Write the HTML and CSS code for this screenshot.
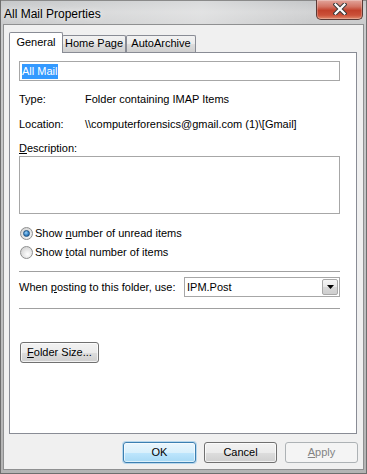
FILE: index.html
```html
<!DOCTYPE html>
<html>
<head>
<meta charset="utf-8">
<link rel="stylesheet" href="styles.css">
</head>
<body>
<div class="window">
  <div class="titlebar">
    <span class="title">All Mail Properties</span>
    <div class="close">
      <svg width="14" height="12" viewBox="0 0 14 12">
        <path d="M2.5 1.5 L11.5 10.5 M11.5 1.5 L2.5 10.5" stroke="#3a3a3a" stroke-width="4.2" stroke-linecap="square"/>
        <path d="M2.5 1.5 L11.5 10.5 M11.5 1.5 L2.5 10.5" stroke="#ffffff" stroke-width="2.2" stroke-linecap="square"/>
      </svg>
    </div>
  </div>
  <div class="client">
    <div class="tabs">
      <div class="tab active">General</div>
      <div class="tab home">Home Page</div>
      <div class="tab archive">AutoArchive</div>
    </div>
    <div class="panel">
      <div class="name-input"><span class="sel">All Mail</span></div>
      <div class="info-row row-type"><span class="lbl">Type:</span><span>Folder containing IMAP Items</span></div>
      <div class="info-row row-loc"><span class="lbl">Location:</span><span>\\computerforensics@gmail.com (1)\[Gmail]</span></div>
      <div class="desc-label"><u>D</u>escription:</div>
      <div class="textarea"></div>
      <div class="radio-row first"><span class="radio checked"></span><span>Show <u>n</u>umber of unread items</span></div>
      <div class="radio-row second"><span class="radio"></span><span>Show <u>t</u>otal number of items</span></div>
      <div class="sep sep1"></div>
      <div class="post-row">
        <span>When <u>p</u>osting to this folder, use:</span>
        <div class="combo">
          <span class="combo-text">IPM.Post</span>
          <span class="drop"><svg width="7" height="4" viewBox="0 0 7 4"><path d="M0 0 H7 L3.5 4 Z" fill="#000"/></svg></span>
        </div>
      </div>
      <div class="sep sep2"></div>
      <div class="btn fsize"><span><u>F</u>older Size...</span></div>
    </div>
    <div class="buttons">
      <div class="btn default">OK</div>
      <div class="btn">Cancel</div>
      <div class="btn disabled"><span><u>A</u>pply</span></div>
    </div>
  </div>
</div>
</body>
</html>
```
FILE: styles.css
```css
html, body {
  margin: 0;
  padding: 0;
  background: #ffffff;
}
body {
  font-family: "Liberation Sans", Arial, sans-serif;
  font-size: 11px;
  color: #000;
}
u { text-decoration: underline; text-underline-offset: 1px; }

.window {
  width: 367px;
  height: 474px;
  box-sizing: border-box;
  display: flex;
  flex-direction: column;
  border: 1px solid #6e6e6e;
  border-top: none;
  padding: 0 2px 3px 2px;
  background: linear-gradient(to bottom, #c4c6c8 0px, #d3d4d5 12px, #cacbcc 24px, #bfc0c1 60%, #b4b4b4 100%);
}
.titlebar {
  height: 24px;
  flex: none;
  display: flex;
  align-items: flex-start;
  justify-content: space-between;
  border-top: 1px solid #8a8a8a;
  box-sizing: border-box;
  background: linear-gradient(to right, rgba(255,255,255,0) 0%, rgba(255,255,255,0.35) 55%, rgba(255,255,255,0) 85%);
  margin: 0 -2px;
  padding: 0 0 0 3px;
}
.title {
  font-size: 12px;
  line-height: 14px;
  margin-top: 6px;
  color: #000;
  text-shadow: 0 0 6px rgba(255,255,255,0.9);
}
.close {
  width: 47px;
  height: 20px;
  margin-top: -1px;
  margin-right: 3px;
  box-sizing: border-box;
  border: 1px solid #5a3a36;
  border-top: none;
  border-radius: 0 0 5px 5px;
  background: linear-gradient(to bottom, #e3a69c 0%, #d27363 35%, #c2412b 55%, #cb5139 80%, #e08a6c 100%);
  display: flex;
  align-items: center;
  justify-content: center;
  box-shadow: inset 0 0 0 1px rgba(255,255,255,0.25);
}
.close svg { margin-top: -1px; }

.client {
  flex: 1;
  background: #f0f0f0;
  border: 1px solid #8f9091;
  display: flex;
  flex-direction: column;
  padding: 7px 6px 0 5px;
}

.tabs {
  display: flex;
  align-items: flex-end;
  height: 20px;
  flex: none;
}
.tab {
  box-sizing: border-box;
  border: 1px solid #898c95;
  border-bottom: none;
  height: 17px;
  line-height: 15px;
  background: linear-gradient(to bottom, #f2f2f2 0%, #ebebeb 50%, #dddddd 51%, #cfcfcf 100%);
  text-align: center;
  border-radius: 2px 2px 0 0;
}
.tab.active {
  width: 54px;
  height: 21px;
  margin-bottom: -1px;
  background: #ffffff;
  position: relative;
  z-index: 1;
  line-height: 17px;
  padding-top: 1px;
}
.tab.home {
  width: 64px;
  margin-left: -1px;
}
.tab.archive {
  width: 70px;
}

.panel {
  box-sizing: border-box;
  width: 348px;
  height: 382px;
  flex: none;
  border: 1px solid #898c95;
  background: #ffffff;
  padding: 8px 16px 0 9px;
  display: flex;
  flex-direction: column;
  align-items: flex-start;
}
.name-input {
  box-sizing: border-box;
  width: 321px;
  height: 20px;
  border: 1px solid #a7a7a7;
  padding: 1px 2px;
  display: flex;
  align-items: center;
}
.sel {
  background: #3399ff;
  color: #fff;
  line-height: 15px;
  padding: 0 1px 0 0;
}
.info-row {
  display: flex;
  line-height: 16px;
}
.row-type { margin-top: 10px; }
.row-loc { margin-top: 9px; }
.lbl { width: 66px; }
.desc-label {
  line-height: 16px;
  margin-top: 8px;
}
.textarea {
  box-sizing: border-box;
  width: 321px;
  height: 58px;
  border: 1px solid #a7a7a7;
}
.radio-row {
  display: flex;
  align-items: center;
  line-height: 16px;
  height: 16px;
  margin-left: 1px;
}
.radio-row.first { margin-top: 11px; }
.radio-row.second { margin-top: 3px; }
.radio {
  box-sizing: border-box;
  width: 13px;
  height: 13px;
  border-radius: 50%;
  border: 1px solid #8e8f8f;
  background: radial-gradient(circle at 60% 65%, #ffffff 0%, #e6e6e6 45%, #c9c9c9 100%);
  margin-right: 2px;
  display: flex;
  align-items: center;
  justify-content: center;
  flex: none;
}
.radio.checked::after {
  content: "";
  width: 7px;
  height: 7px;
  box-sizing: border-box;
  border-radius: 50%;
  border: 1px solid #1c5180;
  background: radial-gradient(circle at 40% 35%, #9fd2f5 0%, #3d8ccf 50%, #16508c 100%);
}
.sep {
  width: 321px;
  height: 1px;
  background: #a0a0a0;
  flex: none;
}
.sep1 { margin-top: 11px; }
.sep2 { margin-top: 11px; }
.post-row {
  margin-top: 5px;
  width: 321px;
  display: flex;
  align-items: center;
  justify-content: space-between;
}
.combo {
  box-sizing: border-box;
  width: 156px;
  height: 20px;
  border: 1px solid #a7a7a7;
  display: flex;
  align-items: center;
  justify-content: space-between;
  padding-left: 2px;
}
.drop {
  box-sizing: border-box;
  width: 16px;
  height: 16px;
  margin-right: 1px;
  border: 1px solid #a8a8a8;
  border-radius: 2px;
  background: linear-gradient(to bottom, #f5f5f5 0%, #e8e8e8 50%, #d8d8d8 51%, #cfcfcf 100%);
  display: flex;
  align-items: center;
  justify-content: center;
}
.btn {
  box-sizing: border-box;
  width: 73px;
  height: 21px;
  border: 1px solid #707070;
  border-radius: 3px;
  background: linear-gradient(to bottom, #f2f2f2 0%, #ebebeb 50%, #dddddd 51%, #cfcfcf 100%);
  box-shadow: inset 0 0 0 1px rgba(255,255,255,0.7);
  display: flex;
  align-items: center;
  justify-content: center;
  line-height: 15px;
  flex: none;
}
.btn.fsize {
  width: 79px;
  margin-top: 33px;
  margin-left: 1px;
}
.buttons {
  display: flex;
  justify-content: flex-end;
  gap: 8px;
  margin-top: 8px;
  margin-right: -1px;
}
.btn.default {
  border-color: #3c7fb1;
  background: linear-gradient(to bottom, #eaf6fd 0%, #d9f0fc 50%, #bee6fd 51%, #a7d9f5 100%);
  box-shadow: inset 0 0 0 1px rgba(255,255,255,0.6), 0 0 0 1px rgba(80,170,230,0.35);
}
.btn.disabled {
  border-color: #adb2b5;
  background: #f4f4f4;
  color: #838383;
  box-shadow: none;
}
```
